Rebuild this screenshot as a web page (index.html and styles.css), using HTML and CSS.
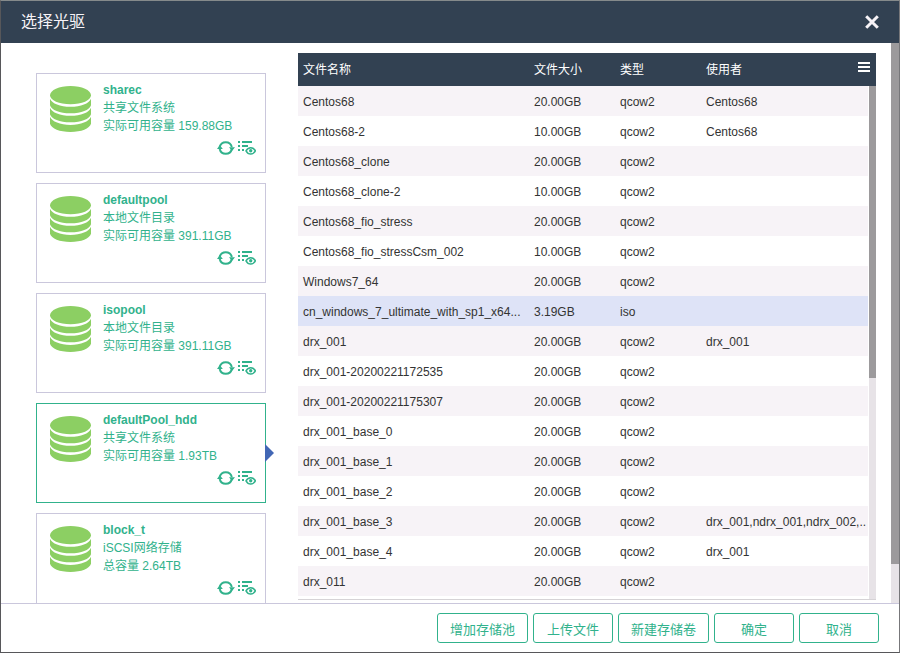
FILE: index.html
```html
<!DOCTYPE html>
<html lang="zh-CN">
<head>
    <meta charset="UTF-8">
    <meta name="viewport" content="width=device-width, initial-scale=1.0">
    <title>选择光驱</title>
    <link rel="stylesheet" href="styles.css">
</head>
<body>
    <svg class="sprite" aria-hidden="true">
        <symbol id="icon-db" viewBox="0 0 41 46">
            <path d="M0 9.300C0 4.200 9.200 0 20.500 0S41 4.200 41 9.300 31.800 18.300 20.500 18.300 0 14.400 0 9.300z"/>
            <path d="M0 12.700c2 4.800 10 8.100 20.500 8.100S39 17.500 41 12.700v6.500c-1.500 4.800-9.500 8.100-20.500 8.100S1.500 24 0 19.200z"/>
            <path d="M0 21.700c2 4.800 10 8.100 20.500 8.100S39 26.500 41 21.700v6.500c-1.500 4.800-9.500 8.100-20.500 8.100S1.500 33 0 28.200z"/>
            <path d="M0 30.800c2 4.800 10 8.100 20.500 8.100S39 35.600 41 30.800v7c-1.500 4.900-9.500 8.200-20.500 8.200S1.500 42.700 0 37.800z"/>
        </symbol>
        <symbol id="icon-refresh" viewBox="0 0 18 16">
            <path d="M2.700 7A6.200 6.200 0 0 1 14.800 7M14.800 9A6.200 6.200 0 0 1 2.700 9" fill="none" stroke="currentColor" stroke-width="2"/>
            <path d="M0 9l2.800-4 3 4zM12 7.200h6L15 11z"/>
        </symbol>
        <symbol id="icon-view" viewBox="0 0 18 16">
            <path d="M0 1h2v2H0zM4 1h10v2H4zM0 5h2v2H0zM4 5h6v2H4zM0 9h2v2H0zM4 9h2v2H4z"/>
            <path d="M8 10.800c2.200-4.200 7.200-4.200 9.400 0-2.200 4.200-7.200 4.200-9.400 0z" fill="none" stroke="currentColor" stroke-width="1.500"/>
            <circle cx="12.700" cy="10.800" r="1.700"/>
        </symbol>
    </svg>

    <div class="dialog" role="dialog" aria-labelledby="dialog-title">
        <header class="dialog-header">
            <h1 id="dialog-title">选择光驱</h1>
            <button class="close" type="button" aria-label="关闭">
                <svg viewBox="0 0 14 14"><path d="M1.200 1.200l11.600 11.600M12.800 1.200L1.200 12.800"/></svg>
            </button>
        </header>

        <div class="dialog-body">
            <div class="content">
                <section class="pools">
                    <article class="pool">
                        <svg class="pool-icon"><use href="#icon-db"/></svg>
                        <div class="pool-info">
                            <h2>sharec</h2>
                            <p>共享文件系统</p>
                            <p>实际可用容量 159.88GB</p>
                            <div class="pool-actions">
                                <button type="button" aria-label="刷新"><svg><use href="#icon-refresh"/></svg></button>
                                <button type="button" aria-label="查看"><svg><use href="#icon-view"/></svg></button>
                            </div>
                        </div>
                    </article>
                    <article class="pool">
                        <svg class="pool-icon"><use href="#icon-db"/></svg>
                        <div class="pool-info">
                            <h2>defaultpool</h2>
                            <p>本地文件目录</p>
                            <p>实际可用容量 391.11GB</p>
                            <div class="pool-actions">
                                <button type="button" aria-label="刷新"><svg><use href="#icon-refresh"/></svg></button>
                                <button type="button" aria-label="查看"><svg><use href="#icon-view"/></svg></button>
                            </div>
                        </div>
                    </article>
                    <article class="pool">
                        <svg class="pool-icon"><use href="#icon-db"/></svg>
                        <div class="pool-info">
                            <h2>isopool</h2>
                            <p>本地文件目录</p>
                            <p>实际可用容量 391.11GB</p>
                            <div class="pool-actions">
                                <button type="button" aria-label="刷新"><svg><use href="#icon-refresh"/></svg></button>
                                <button type="button" aria-label="查看"><svg><use href="#icon-view"/></svg></button>
                            </div>
                        </div>
                    </article>
                    <article class="pool active">
                        <svg class="pool-icon"><use href="#icon-db"/></svg>
                        <div class="pool-info">
                            <h2>defaultPool_hdd</h2>
                            <p>共享文件系统</p>
                            <p>实际可用容量 1.93TB</p>
                            <div class="pool-actions">
                                <button type="button" aria-label="刷新"><svg><use href="#icon-refresh"/></svg></button>
                                <button type="button" aria-label="查看"><svg><use href="#icon-view"/></svg></button>
                            </div>
                        </div>
                    </article>
                    <article class="pool">
                        <svg class="pool-icon"><use href="#icon-db"/></svg>
                        <div class="pool-info">
                            <h2>block_t</h2>
                            <p>iSCSI网络存储</p>
                            <p>总容量 2.64TB</p>
                            <div class="pool-actions">
                                <button type="button" aria-label="刷新"><svg><use href="#icon-refresh"/></svg></button>
                                <button type="button" aria-label="查看"><svg><use href="#icon-view"/></svg></button>
                            </div>
                        </div>
                    </article>
                </section>

                <section class="files">
                    <div class="files-view">
                        <table>
                            <thead>
                                <tr><th class="col-name">文件名称</th><th class="col-size">文件大小</th><th class="col-type">类型</th><th>使用者</th></tr>
                            </thead>
                            <tbody>
                                <tr><td>Centos68</td><td>20.00GB</td><td>qcow2</td><td>Centos68</td></tr>
                                <tr><td>Centos68-2</td><td>10.00GB</td><td>qcow2</td><td>Centos68</td></tr>
                                <tr><td>Centos68_clone</td><td>20.00GB</td><td>qcow2</td><td></td></tr>
                                <tr><td>Centos68_clone-2</td><td>10.00GB</td><td>qcow2</td><td></td></tr>
                                <tr><td>Centos68_fio_stress</td><td>20.00GB</td><td>qcow2</td><td></td></tr>
                                <tr><td>Centos68_fio_stressCsm_002</td><td>10.00GB</td><td>qcow2</td><td></td></tr>
                                <tr><td>Windows7_64</td><td>20.00GB</td><td>qcow2</td><td></td></tr>
                                <tr class="selected"><td>cn_windows_7_ultimate_with_sp1_x64...</td><td>3.19GB</td><td>iso</td><td></td></tr>
                                <tr><td>drx_001</td><td>20.00GB</td><td>qcow2</td><td>drx_001</td></tr>
                                <tr><td>drx_001-20200221172535</td><td>20.00GB</td><td>qcow2</td><td></td></tr>
                                <tr><td>drx_001-20200221175307</td><td>20.00GB</td><td>qcow2</td><td></td></tr>
                                <tr><td>drx_001_base_0</td><td>20.00GB</td><td>qcow2</td><td></td></tr>
                                <tr><td>drx_001_base_1</td><td>20.00GB</td><td>qcow2</td><td></td></tr>
                                <tr><td>drx_001_base_2</td><td>20.00GB</td><td>qcow2</td><td></td></tr>
                                <tr><td>drx_001_base_3</td><td>20.00GB</td><td>qcow2</td><td>drx_001,ndrx_001,ndrx_002,..</td></tr>
                                <tr><td>drx_001_base_4</td><td>20.00GB</td><td>qcow2</td><td>drx_001</td></tr>
                                <tr><td>drx_011</td><td>20.00GB</td><td>qcow2</td><td></td></tr>
                            </tbody>
                        </table>
                    </div>
                    <div class="files-side">
                        <div class="scroll"><div class="scroll-thumb"></div></div>
                    </div>
                    <button class="menu" type="button" aria-label="列设置">
                        <svg viewBox="0 0 12 10"><path d="M0 1h12M0 5h12M0 9h12"/></svg>
                    </button>
                </section>
            </div>
            <div class="scroll page-scroll"><div class="scroll-thumb"></div></div>
        </div>

        <footer class="dialog-footer">
            <button type="button">增加存储池</button>
            <button type="button">上传文件</button>
            <button type="button">新建存储卷</button>
            <button type="button">确定</button>
            <button type="button">取消</button>
        </footer>
    </div>
</body>
</html>
```
FILE: styles.css
```css
* {
    box-sizing: border-box;
}

body {
    margin: 0;
    font-family: "Liberation Sans", "Noto Sans CJK SC", sans-serif;
    font-size: 12px;
    line-height: 18px;
    color: #333;
    background: #fff;
}

h1, h2, p {
    margin: 0;
}

button {
    padding: 0;
    border: none;
    background: none;
    color: inherit;
    font-family: inherit;
    cursor: pointer;
}

svg {
    display: block;
    fill: currentColor;
}

.sprite {
    position: absolute;
    width: 0;
    height: 0;
}

.dialog {
    display: flex;
    flex-direction: column;
    height: 100vh;
    border: 1px solid #57575a;
    border-top-color: #858a8b;
    border-right-color: #77777a;
}

.dialog-header {
    display: flex;
    flex: none;
    align-items: center;
    justify-content: space-between;
    height: 42px;
    padding: 0 20px;
    background: #324152;
    color: #f7f3f7;
}

.dialog-header h1 {
    font-size: 16px;
    font-weight: normal;
}

.close svg {
    width: 14px;
    height: 14px;
    stroke: currentColor;
    stroke-width: 3;
}

.dialog-body {
    display: flex;
    flex: 1;
    min-height: 0;
    overflow: hidden;
}

.content {
    display: flex;
    flex: 1;
    gap: 32px;
    min-width: 0;
    padding: 10px 15px 3px 35px;
}

.pools {
    display: flex;
    flex: none;
    flex-direction: column;
    gap: 10px;
    width: 230px;
    padding-top: 20px;
}

.pool {
    position: relative;
    display: flex;
    flex: none;
    gap: 12px;
    height: 100px;
    padding: 7px 9px 7px 13px;
    border: 1px solid #cac7dc;
    color: #31b28c;
}

.pool.active {
    border-color: #31b28c;
}

.pool.active::after {
    content: "";
    position: absolute;
    top: 40px;
    left: 100%;
    border: 9px solid transparent;
    border-left-color: #4267b5;
    border-right: none;
}

.pool-icon {
    flex: none;
    width: 41px;
    height: 46px;
    margin-top: 5px;
    color: #8ccf63;
}

.pool-info {
    flex: 1;
    min-width: 0;
}

.pool-info h2 {
    font-size: 12px;
}

.pool-info p {
    white-space: nowrap;
}

.pool-actions {
    display: flex;
    justify-content: flex-end;
    gap: 3px;
    margin-top: 5px;
}

.pool-actions svg {
    width: 18px;
    height: 16px;
}

.files {
    position: relative;
    display: flex;
    flex: 1;
    min-width: 0;
    border-bottom: 1px solid #d6d3d6;
}

.files-view {
    flex: 1;
    min-width: 0;
    overflow: hidden;
}

.files table {
    width: 100%;
    table-layout: fixed;
    border-collapse: collapse;
}

.files th,
.files td {
    padding: 0 0 0 5px;
    overflow: hidden;
    text-align: left;
    text-overflow: ellipsis;
    white-space: nowrap;
}

.files th {
    height: 33px;
    background: #324152;
    color: #fff;
    font-weight: normal;
}

.files td {
    height: 30px;
    padding-top: 2px;
}

.files .col-name {
    width: 231px;
}

.files .col-size,
.files .col-type {
    width: 86px;
}

.files tbody tr:nth-child(odd) {
    background: #f7f3f7;
}

.files tbody tr.selected {
    background: #dee3f7;
}

.files-side {
    display: flex;
    flex: none;
    flex-direction: column;
    width: 8px;
    padding-left: 1px;
    border-top: 33px solid #324152;
}

.menu {
    position: absolute;
    top: 9px;
    right: 6px;
}

.menu svg {
    width: 12px;
    height: 10px;
    stroke: #fff;
    stroke-width: 2;
}

.scroll {
    flex: 1;
    background: #e7e3e7;
}

.scroll-thumb {
    height: 57%;
    background: #9c9a9c;
}

.page-scroll {
    flex: none;
    width: 8px;
}

.page-scroll .scroll-thumb {
    height: 93%;
}

.dialog-footer {
    display: flex;
    flex: none;
    justify-content: flex-end;
    gap: 5px;
    padding: 9px 20px;
    border-top: 1px solid #cac7dc;
}

.dialog-footer button {
    min-width: 80px;
    height: 30px;
    padding: 0 12px;
    border: 1px solid #31b28c;
    border-radius: 3px;
    color: #31b28c;
    font-size: 13px;
}
```
